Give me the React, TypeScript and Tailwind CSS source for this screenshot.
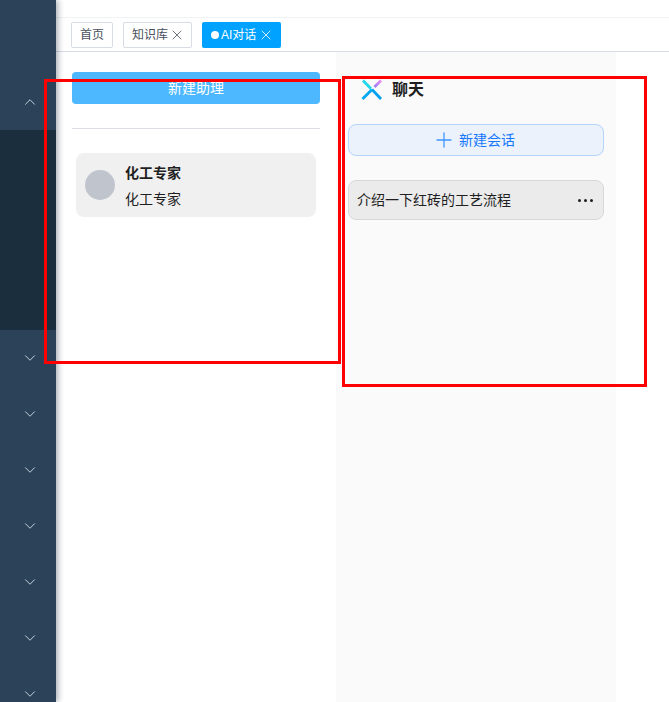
import React from 'react'
import { ChevronUp, ChevronDown, X, Plus } from 'lucide-react'

const font = { fontFamily: '"Liberation Sans", "Noto Sans CJK SC", sans-serif' }

function Logo() {
  return (
    <svg width="22" height="22" viewBox="0 0 22 22" fill="none">
      <defs>
        <linearGradient id="pinkArm" x1="13" y1="9" x2="20" y2="1" gradientUnits="userSpaceOnUse">
          <stop offset="0" stopColor="#8a7cf5" />
          <stop offset="1" stopColor="#f08cf0" />
        </linearGradient>
      </defs>
      <path d="M11 10.5 L20 20" stroke="#00a0f0" strokeWidth="2.8" />
      <path d="M1.5 20 L11 10.5" stroke="#00a8f0" strokeWidth="2.8" />
      <path d="M2 1.5 L10 9.8" stroke="#1fd6ea" strokeWidth="2.8" />
      <path d="M13.5 8 L20 1.5" stroke="url(#pinkArm)" strokeWidth="2.8" />
    </svg>
  )
}

function SideRow({ open = false }: { open?: boolean }) {
  const Icon = open ? ChevronUp : ChevronDown
  return (
    <div className="h-14 flex items-center justify-end pr-[17px] shrink-0">
      <Icon className="w-[18px] h-[18px] text-[#d5e0e9]" strokeWidth={1.2} />
    </div>
  )
}

export default function App() {
  return (
    <div className="relative w-[669px] h-[702px] overflow-hidden bg-white flex" style={font}>
      {/* sidebar */}
      <aside className="w-14 h-full shrink-0 bg-[#2b4258] flex flex-col shadow-[2px_0_6px_rgba(0,21,41,0.35)] z-10">
        <div className="h-[74px] shrink-0" />
        <SideRow open />
        <div className="h-[200px] shrink-0 bg-[#1a2e3d]" />
        <SideRow />
        <SideRow />
        <SideRow />
        <SideRow />
        <SideRow />
        <SideRow />
        <SideRow />
      </aside>

      <main className="flex-1 min-w-0 flex flex-col">
        <div className="h-[18px] shrink-0 border-b border-[#f0f2f5]" />
        <div className="h-[34px] shrink-0 border-b border-[#d8dce5] flex items-start gap-[10px] pl-[15px] pt-1">
          <div className="h-[26px] px-2 border border-[#d8dce5] rounded-[2px] flex items-center text-xs text-[#495060]">首页</div>
          <div className="h-[26px] pl-2 pr-[6px] border border-[#d8dce5] rounded-[2px] flex items-center text-xs text-[#495060]">
            知识库
            <X className="w-4 h-4 ml-[1px]" strokeWidth={1.2} />
          </div>
          <div className="h-[26px] pl-[9px] pr-[7px] rounded-[2px] bg-[#00a2ff] flex items-center text-xs text-white">
            <span className="w-2 h-2 rounded-full bg-white mr-[2px]" />
            AI对话
            <X className="w-4 h-4 ml-[2px]" strokeWidth={1.2} />
          </div>
        </div>

        <div className="flex-1 flex min-h-0">
          {/* assistants */}
          <section className="w-[280px] shrink-0 pl-4 pt-5">
            <button className="w-[248px] h-8 rounded bg-[#4db8ff] text-white text-sm">新建助理</button>
            <div className="w-[248px] h-px bg-[#dcdfe6] mt-6" />
            <div className="w-[240px] h-16 ml-1 mt-6 rounded-lg bg-[#f0f0f0] flex items-center pl-[9px] gap-[10px]">
              <div className="w-[30px] h-[30px] rounded-full bg-[#c0c4cc]" />
              <div className="flex flex-col gap-[6px] pt-[2px] text-sm leading-[20px] text-[#1f1f1f]">
                <span className="font-bold">化工专家</span>
                <span>化工专家</span>
              </div>
            </div>
          </section>

          {/* conversations */}
          <section className="w-[280px] shrink-0 bg-[#fafafa] px-3 flex flex-col">
            <div className="h-6 mt-[26px] pl-[13px] flex items-center gap-[9px]">
              <Logo />
              <span className="text-base font-bold text-[#1f1f1f]">聊天</span>
            </div>
            <button className="h-8 mt-[22px] rounded-lg border border-[#b3d4fc] bg-[#ebf2fb] flex items-center justify-center gap-[3px] text-sm text-[#1677ff]">
              <Plus className="w-6 h-6 -ml-[5px] text-[#4096ff]" strokeWidth={1.3} />
              新建会话
            </button>
            <div className="h-10 mt-6 rounded-lg border border-[#d9d9d9] bg-[#ebebeb] flex items-center justify-between pl-2 pr-[10px] text-sm text-[#1f1f1f]">
              <span>介绍一下红砖的工艺流程</span>
              <span className="flex gap-[3px]">
                <span className="w-[3px] h-[3px] rounded-full bg-[#1f1f1f]" />
                <span className="w-[3px] h-[3px] rounded-full bg-[#1f1f1f]" />
                <span className="w-[3px] h-[3px] rounded-full bg-[#1f1f1f]" />
              </span>
            </div>
          </section>
        </div>
      </main>

      {/* red annotation boxes drawn over the screenshot */}
      <div className="absolute left-[44px] top-[79px] w-[297px] h-[285px] border-[3px] border-[#ff0000] z-20" />
      <div className="absolute left-[342px] top-[76px] w-[305px] h-[311px] border-[3px] border-[#ff0000] z-20" />
    </div>
  )
}
